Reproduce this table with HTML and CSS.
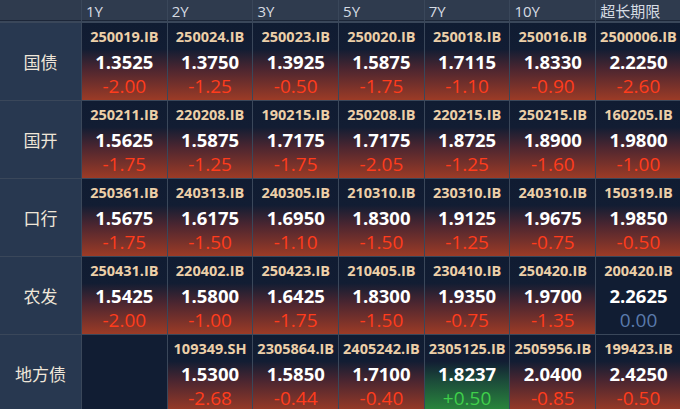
FILE: index.html
```html
<!DOCTYPE html>
<html lang="zh">
<head>
<meta charset="utf-8">
<link rel="stylesheet" href="styles.css">
</head>
<body>
<div class="board">
  <div class="hd"></div>
  <div class="hd">1Y</div>
  <div class="hd">2Y</div>
  <div class="hd">3Y</div>
  <div class="hd">5Y</div>
  <div class="hd">7Y</div>
  <div class="hd">10Y</div>
  <div class="hd">超长期限</div>

  <div class="lbl">国债</div>
  <div class="cell down"><div class="code">250019.IB</div><div class="val">1.3525</div><div class="chg">-2.00</div></div>
  <div class="cell down"><div class="code">250024.IB</div><div class="val">1.3750</div><div class="chg">-1.25</div></div>
  <div class="cell down"><div class="code">250023.IB</div><div class="val">1.3925</div><div class="chg">-0.50</div></div>
  <div class="cell down"><div class="code">250020.IB</div><div class="val">1.5875</div><div class="chg">-1.75</div></div>
  <div class="cell down"><div class="code">250018.IB</div><div class="val">1.7115</div><div class="chg">-1.10</div></div>
  <div class="cell down"><div class="code">250016.IB</div><div class="val">1.8330</div><div class="chg">-0.90</div></div>
  <div class="cell down"><div class="code">2500006.IB</div><div class="val">2.2250</div><div class="chg">-2.60</div></div>

  <div class="lbl">国开</div>
  <div class="cell down"><div class="code">250211.IB</div><div class="val">1.5625</div><div class="chg">-1.75</div></div>
  <div class="cell down"><div class="code">220208.IB</div><div class="val">1.5875</div><div class="chg">-1.25</div></div>
  <div class="cell down"><div class="code">190215.IB</div><div class="val">1.7175</div><div class="chg">-1.75</div></div>
  <div class="cell down"><div class="code">250208.IB</div><div class="val">1.7175</div><div class="chg">-2.05</div></div>
  <div class="cell down"><div class="code">220215.IB</div><div class="val">1.8725</div><div class="chg">-1.25</div></div>
  <div class="cell down"><div class="code">250215.IB</div><div class="val">1.8900</div><div class="chg">-1.60</div></div>
  <div class="cell down"><div class="code">160205.IB</div><div class="val">1.9800</div><div class="chg">-1.00</div></div>

  <div class="lbl">口行</div>
  <div class="cell down"><div class="code">250361.IB</div><div class="val">1.5675</div><div class="chg">-1.75</div></div>
  <div class="cell down"><div class="code">240313.IB</div><div class="val">1.6175</div><div class="chg">-1.50</div></div>
  <div class="cell down"><div class="code">240305.IB</div><div class="val">1.6950</div><div class="chg">-1.10</div></div>
  <div class="cell down"><div class="code">210310.IB</div><div class="val">1.8300</div><div class="chg">-1.50</div></div>
  <div class="cell down"><div class="code">230310.IB</div><div class="val">1.9125</div><div class="chg">-1.25</div></div>
  <div class="cell down"><div class="code">240310.IB</div><div class="val">1.9675</div><div class="chg">-0.75</div></div>
  <div class="cell down"><div class="code">150319.IB</div><div class="val">1.9850</div><div class="chg">-0.50</div></div>

  <div class="lbl">农发</div>
  <div class="cell down"><div class="code">250431.IB</div><div class="val">1.5425</div><div class="chg">-2.00</div></div>
  <div class="cell down"><div class="code">220402.IB</div><div class="val">1.5800</div><div class="chg">-1.00</div></div>
  <div class="cell down"><div class="code">250423.IB</div><div class="val">1.6425</div><div class="chg">-1.75</div></div>
  <div class="cell down"><div class="code">210405.IB</div><div class="val">1.8300</div><div class="chg">-1.50</div></div>
  <div class="cell down"><div class="code">230410.IB</div><div class="val">1.9350</div><div class="chg">-0.75</div></div>
  <div class="cell down"><div class="code">250420.IB</div><div class="val">1.9700</div><div class="chg">-1.35</div></div>
  <div class="cell flat"><div class="code">200420.IB</div><div class="val">2.2625</div><div class="chg">0.00</div></div>

  <div class="lbl">地方债</div>
  <div class="cell empty"></div>
  <div class="cell down"><div class="code">109349.SH</div><div class="val">1.5300</div><div class="chg">-2.68</div></div>
  <div class="cell down"><div class="code">2305864.IB</div><div class="val">1.5850</div><div class="chg">-0.44</div></div>
  <div class="cell down"><div class="code">2405242.IB</div><div class="val">1.7100</div><div class="chg">-0.40</div></div>
  <div class="cell up"><div class="code">2305125.IB</div><div class="val">1.8237</div><div class="chg">+0.50</div></div>
  <div class="cell down"><div class="code">2505956.IB</div><div class="val">2.0400</div><div class="chg">-0.85</div></div>
  <div class="cell down"><div class="code">199423.IB</div><div class="val">2.4250</div><div class="chg">-0.50</div></div>
</div>
</body>
</html>
```

FILE: styles.css
```css
html, body {
  margin: 0;
  padding: 0;
  background: #1a2436;
  overflow: hidden;
}
body {
  width: 680px;
  height: 409px;
  font-family: "Open Sans", "Noto Sans CJK SC", sans-serif;
}
.board {
  display: grid;
  grid-template-columns: 81px repeat(7, 84.7px);
  grid-template-rows: 22px repeat(5, 77px);
  column-gap: 1px;
  row-gap: 1px;
  background: #3a475a;
  width: 690px;
}
.hd {
  background: #2f3b4e;
  color: #d6dbe3;
  font-size: 15px;
  line-height: 22px;
  padding-left: 4px;
  margin-bottom: 1px;
  border-bottom: 1px solid #1c2638;
}
.lbl {
  background: #283850;
  color: #efe6d8;
  font-family: "Noto Sans CJK SC", sans-serif;
  font-size: 17px;
  display: flex;
  align-items: center;
  justify-content: center;
}
.cell {
  display: flex;
  flex-direction: column;
  align-items: center;
  padding-top: 4px;
  background: #111d33;
}
.cell.down {
  background: linear-gradient(to bottom, #101c32 0%, #121d33 34%, #4c2630 60%, #9c3b26 100%);
}
.cell.up {
  background: linear-gradient(to bottom, #101c32 0%, #121d33 34%, #1c4c3a 60%, #2a8a3c 100%);
}
.code {
  color: #eccfa8;
  font-size: 14.5px;
  font-weight: 700;
  line-height: 20px;
}
.val {
  color: #ffffff;
  font-size: 18.5px;
  font-weight: 700;
  line-height: 30px;
}
.chg {
  color: #ff3c1c;
  font-size: 19px;
  font-weight: 500;
  line-height: 18px;
}
.up .chg { color: #3fd04a; }
.flat .chg { color: #5a7aac; }
```
